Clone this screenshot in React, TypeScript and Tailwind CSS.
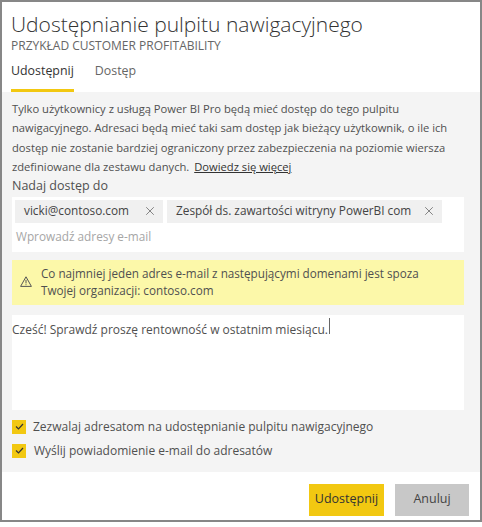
import { X } from "lucide-react"

const font = { fontFamily: '"Open Sans", "Noto Sans", sans-serif' }

function WarningIcon() {
  return (
    <svg width="12" height="11" viewBox="0 0 12 11" fill="none" stroke="#555" strokeWidth="1">
      <path d="M6 0.8 L11.4 10.4 H0.6 Z" strokeLinejoin="round" />
      <path d="M6 3.8 V7.4" />
      <path d="M6 8.3 V9.2" />
    </svg>
  )
}

function Check() {
  return (
    <div className="w-[14px] h-[14px] bg-[#f2c811] flex items-center justify-center shrink-0">
      <svg width="9" height="7" viewBox="0 0 9 7" fill="none" stroke="#333" strokeWidth="1.2">
        <path d="M1 3.5 L3.5 6 L8 1" />
      </svg>
    </div>
  )
}

export default function App() {
  return (
    <div className="w-[482px] h-[522px] border-2 border-[#878787] bg-white flex flex-col whitespace-nowrap" style={font}>
      {/* Header */}
      <div className="px-[9px] pt-[8px]">
        <h1 className="text-[21px] leading-[28px] font-light text-[#333]">Udostępnianie pulpitu nawigacyjnego</h1>
        <p className="text-[12px] leading-[16px] text-[#666]">PRZYKŁAD CUSTOMER PROFITABILITY</p>
        <div className="flex gap-[21px] mt-[8px] text-[12.4px]">
          <div className="pb-[8px] border-b-[3px] border-[#f2c811] text-[#333]">Udostępnij</div>
          <div className="pb-[8px] border-b-[3px] border-transparent text-[#666]">Dostęp</div>
        </div>
      </div>

      {/* Body */}
      <div className="bg-[#f4f4f4] pl-[10px] pr-[16px] pt-[7px] h-[380px] text-[#505050]">
        <p className="text-[11.2px] leading-[19.5px]">
          Tylko użytkownicy z usługą Power BI Pro będą mieć dostęp do tego pulpitu
          <br />
          nawigacyjnego. Adresaci będą mieć taki sam dostęp jak bieżący użytkownik, o ile ich
          <br />
          dostęp nie zostanie bardziej ograniczony przez zabezpieczenia na poziomie wiersza
          <br />
          zdefiniowane dla zestawu danych.{" "}
          <span className="underline text-[#333] ml-[2px]">Dowiedz się więcej</span>
        </p>
        <p className="text-[12.5px] leading-[18px]">Nadaj dostęp do</p>

        <div className="mt-[2px] bg-white h-[55px] px-[3px] pt-[3px]">
          <div className="flex gap-[4px]">
            <div className="h-[23px] bg-[#f0f0f0] flex items-center pl-[9px] pr-[6px] w-[148px] justify-between text-[11.8px] text-[#444]">
              <span>vicki@contoso.com</span>
              <X size={14} strokeWidth={1.2} color="#555" />
            </div>
            <div className="h-[23px] bg-[#f0f0f0] flex items-center pl-[9px] pr-[6px] w-[275px] justify-between text-[11.8px] text-[#444]">
              <span>Zespół ds. zawartości witryny PowerBI com</span>
              <X size={14} strokeWidth={1.2} color="#555" />
            </div>
          </div>
          <div className="text-[11.8px] text-[#a6a6a6] mt-[5px] pl-[1px]">Wprowadź adresy e-mail</div>
        </div>

        <div className="mt-[8px] bg-[#fcf8a9] h-[45px] flex pl-[8px] pt-[5px] gap-[9px] text-[11.7px] leading-[17px] text-[#505050]">
          <div className="pt-[11px]">
            <WarningIcon />
          </div>
          <p>
            Co najmniej jeden adres e-mail z następującymi domenami jest spoza
            <br />
            Twojej organizacji: contoso.com
          </p>
        </div>

        <div className="mt-[10px] bg-white h-[95px] pt-[6px] text-[12px] text-[#505050]">
          <span>Cześć! Sprawdź proszę rentowność w ostatnim miesiącu.</span>
          <span className="inline-block w-px h-[16px] bg-[#666] align-top -mt-[3px] ml-[1px]" />
        </div>

        <div className="mt-[10px] h-[14px] flex items-center gap-[7px] text-[12px]">
          <Check />
          <span>Zezwalaj adresatom na udostępnianie pulpitu nawigacyjnego</span>
        </div>
        <div className="mt-[10px] h-[14px] flex items-center gap-[8px] text-[12px]">
          <Check />
          <span>Wyślij powiadomienie e-mail do adresatów</span>
        </div>
      </div>

      {/* Footer */}
      <div className="flex justify-end gap-[11px] pr-[11px] pt-[12px]">
        <button className="w-[75px] h-[32px] bg-[#f2c811] text-[12.5px] text-[#333]">Udostępnij</button>
        <button className="w-[74px] h-[32px] bg-[#c8c8c8] text-[12.5px] text-[#444]">Anuluj</button>
      </div>
    </div>
  )
}
